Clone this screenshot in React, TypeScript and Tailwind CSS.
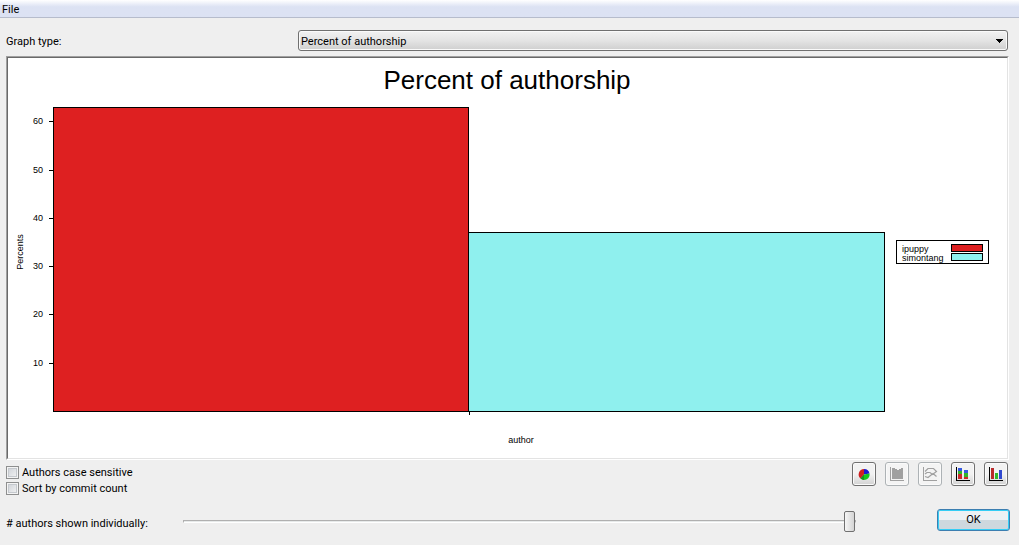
import { useState, type ReactNode } from "react";

type Author = { name: string; percent: number; color: string };

const authors: Author[] = [
  { name: "ipuppy", percent: 63, color: "#de2021" },
  { name: "simontang", percent: 37, color: "#8ff0ee" },
];

const ticks = [10, 20, 30, 40, 50, 60];
const baseline = 353;
const plotLeft = 45;
const barWidth = 416;
const yOf = (value: number) => Math.round(baseline - value * 4.83);

function Chart() {
  return (
    <svg
      viewBox="0 0 999 400"
      className="block h-auto w-full bg-white font-['Liberation_Sans',Arial,sans-serif]"
      role="img"
      aria-label="Percent of authorship"
    >
      <text x="499" y="31" fontSize="26" textAnchor="middle">
        Percent of authorship
      </text>
      <g shapeRendering="crispEdges" stroke="#000" strokeWidth="1">
        {ticks.map((t) => (
          <line key={t} x1="41" x2="45" y1={yOf(t) + 0.5} y2={yOf(t) + 0.5} />
        ))}
        {authors.map((a, i) => (
          <rect
            key={a.name}
            x={plotLeft + i * barWidth - (i ? 0.5 : -0.5)}
            y={yOf(a.percent) + 0.5}
            width={i ? barWidth : barWidth - 1}
            height={baseline - yOf(a.percent)}
            fill={a.color}
          />
        ))}
        <line x1="461.5" x2="461.5" y1="353" y2="357" />
        <rect x="888.5" y="182.5" width="92" height="23" fill="#fff" />
        {authors.map((a, i) => (
          <rect key={a.name} x="943.5" y={186.5 + i * 9} width="31" height="7" fill={a.color} />
        ))}
      </g>
      <g fontSize="9">
        {ticks.map((t) => (
          <text key={t} x="35" y={yOf(t) + 3} textAnchor="end">
            {t}
          </text>
        ))}
        <text x="513" y="385" textAnchor="middle">
          author
        </text>
        <text transform="translate(15 194) rotate(-90)" textAnchor="middle">
          Percents
        </text>
        {authors.map((a, i) => (
          <text key={a.name} x="894" y={194 + i * 9}>
            {a.name}
          </text>
        ))}
      </g>
    </svg>
  );
}

function PieIcon() {
  return (
    <svg viewBox="0 0 16 16" className="size-4">
      <path d="M8 8.5V3A5.5 5.5 0 0 0 4.5 12.6Z" fill="#cf2020" />
      <path d="M8 8.5V3A5.5 5.5 0 0 1 13.5 7.5Z" fill="#1a1ad0" />
      <path d="M8 8.5L13.5 7.5A5.5 5.5 0 0 1 4.5 12.6Z" fill="#12c81c" />
      <path d="M8 8.5V14A5.5 5.5 0 0 1 4.5 12.6Z" fill="#178c20" />
    </svg>
  );
}

function AreaIcon() {
  return (
    <svg viewBox="0 0 16 16" className="size-4" shapeRendering="crispEdges">
      <path d="M1.5 1V14.5H15" fill="none" stroke="#a0a0a0" />
      <path d="M3 2h3v1h2v1h2V3h2V2h2v11H3Z" fill="#a0a0a0" />
    </svg>
  );
}

function LineIcon() {
  return (
    <svg viewBox="0 0 16 16" className="size-4" fill="none" stroke="#a0a0a0">
      <path d="M1.5 1V14.5H15" shapeRendering="crispEdges" />
      <path d="M3 5.500L6 2.500H11.500L14.500 5.500L10.500 8.500L8 6.500H5L3 8M3 10.500L6 11.500L11 7.500L14.500 10.500" strokeWidth="1.200" />
    </svg>
  );
}

function StackedIcon() {
  return (
    <svg viewBox="0 0 16 16" className="size-4" shapeRendering="crispEdges">
      <path d="M1.500 1V14.500H15" fill="none" stroke="#000" />
      <path d="M3 2h4v3H3ZM9 4h4v3H9Z" fill="#3558e0" />
      <path d="M3 5h4v3H3ZM9 7h4v4H9Z" fill="#30b52c" />
      <path d="M3 8h4v5H3ZM9 11h4v2H9Z" fill="#cb2929" />
    </svg>
  );
}

function BarsIcon() {
  return (
    <svg viewBox="0 0 16 16" className="size-4" shapeRendering="crispEdges">
      <path d="M1.500 1V14.500H15" fill="none" stroke="#000" />
      <path d="M3 2h3v11H3Z" fill="#b92a2a" />
      <path d="M7 7h3v6H7Z" fill="#32b82c" />
      <path d="M11 4h3v9h-3Z" fill="#3048cf" />
    </svg>
  );
}

function ToolButton({ label, disabled = false, children }: { label: string; disabled?: boolean; children: ReactNode }) {
  return (
    <button
      type="button"
      aria-label={label}
      disabled={disabled}
      className="flex size-6 items-center justify-center rounded-[3px] border border-[#707070] bg-linear-to-b from-[#f2f2f2] from-50% to-[#d2d2d2] shadow-[inset_0_0_0_1px_#fafafa] disabled:border-[#adb2b5] disabled:from-[#f4f4f4] disabled:to-[#f4f4f4]"
    >
      {children}
    </button>
  );
}

function Check({ label }: { label: string }) {
  return (
    <label className="flex h-4 items-center gap-[3px]">
      <input
        type="checkbox"
        className="size-[13px] appearance-none border border-[#8e8f8f] bg-linear-to-br from-[#cbcfd5] to-[#f6f6f6] shadow-[inset_0_0_0_1px_#f4f4f4,inset_0_0_0_2px_#c5c9ce] checked:bg-[#4a6a9a]"
      />
      <span className="pt-0.5">{label}</span>
    </label>
  );
}

export default function App() {
  const [shown, setShown] = useState(100);

  return (
    <div className="min-h-screen bg-[#efefef] font-[Roboto,Tahoma,sans-serif] text-[11px] leading-4 text-black">
      <nav className="flex h-[18px] items-center border-b border-[#b6bccc] bg-linear-to-b from-white from-0% via-[#dce2f3] via-40% to-[#dce2f3]">
        <button type="button" className="px-0.5 pt-0.5">
          File
        </button>
      </nav>
      <main className="px-1.5 pt-3">
        <div className="flex items-center pr-[5px]">
          <label htmlFor="graph-type" className="w-[292px] shrink-0 pt-0.5">
            Graph type:
          </label>
          <div className="grid min-w-0 flex-1 items-center">
            <select
              id="graph-type"
              className="col-start-1 row-start-1 h-[21px] w-full appearance-none rounded-[3px] border border-[#707070] bg-linear-to-b from-[#f2f2f2] from-0% via-[#e4e4e4] via-50% to-[#cfcfcf] px-0.5 pt-0.5 shadow-[inset_0_0_0_1px_#fafafa]"
            >
              <option>Percent of authorship</option>
            </select>
            <svg viewBox="0 0 7 4" shapeRendering="crispEdges" className="pointer-events-none col-start-1 row-start-1 mr-[5px] h-1 w-[7px] justify-self-end">
              <path d="M0 0h7v1H0ZM1 1h5v1H1ZM2 2h3v1H2ZM3 3h1v1H3Z" />
            </svg>
          </div>
        </div>
        <section className="mt-[5px] mr-1 border border-t-[#a0a0a0] border-r-white border-b-white border-l-[#a0a0a0]">
          <div className="border border-t-[#696969] border-r-[#e3e3e3] border-b-[#e3e3e3] border-l-[#696969]">
            <Chart />
          </div>
        </section>
        <div className="mt-0.5 flex items-start justify-between pr-[5px]">
          <div className="pt-0.5">
            <Check label="Authors case sensitive" />
            <Check label="Sort by commit count" />
          </div>
          <div className="flex gap-[9px]">
            <ToolButton label="Pie chart">
              <PieIcon />
            </ToolButton>
            <ToolButton label="Area chart" disabled>
              <AreaIcon />
            </ToolButton>
            <ToolButton label="Line chart" disabled>
              <LineIcon />
            </ToolButton>
            <ToolButton label="Stacked bar chart">
              <StackedIcon />
            </ToolButton>
            <ToolButton label="Bar chart">
              <BarsIcon />
            </ToolButton>
          </div>
        </div>
        <div className="mt-[13px] flex items-start pr-[3px]">
          <label htmlFor="shown" className="w-[177px] shrink-0 pt-[7px]">
            # authors shown individually:
          </label>
          <input
            id="shown"
            type="range"
            min={0}
            max={100}
            value={shown}
            onChange={(e) => setShown(Number(e.target.value))}
            className="mt-0.5 h-[21px] min-w-0 flex-1 appearance-none bg-transparent [&::-webkit-slider-runnable-track]:h-[3px] [&::-webkit-slider-runnable-track]:border [&::-webkit-slider-runnable-track]:border-[#b0b0b0] [&::-webkit-slider-runnable-track]:border-b-white [&::-webkit-slider-runnable-track]:bg-[#e7eaea] [&::-webkit-slider-thumb]:-mt-2.5 [&::-webkit-slider-thumb]:h-[21px] [&::-webkit-slider-thumb]:w-[11px] [&::-webkit-slider-thumb]:appearance-none [&::-webkit-slider-thumb]:rounded-xs [&::-webkit-slider-thumb]:border [&::-webkit-slider-thumb]:border-[#707070] [&::-webkit-slider-thumb]:bg-linear-to-r [&::-webkit-slider-thumb]:from-[#f6f6f6] [&::-webkit-slider-thumb]:to-[#d4d4d4]"
          />
          <button
            type="button"
            className="ml-[81px] h-[22px] w-[73px] shrink-0 rounded-[3px] border border-[#3c7fb1] bg-linear-to-b from-[#edf1f4] from-50% to-[#cdd8de] to-50% shadow-[inset_0_0_0_1px_#35cdf5]"
          >
            OK
          </button>
        </div>
      </main>
    </div>
  );
}
